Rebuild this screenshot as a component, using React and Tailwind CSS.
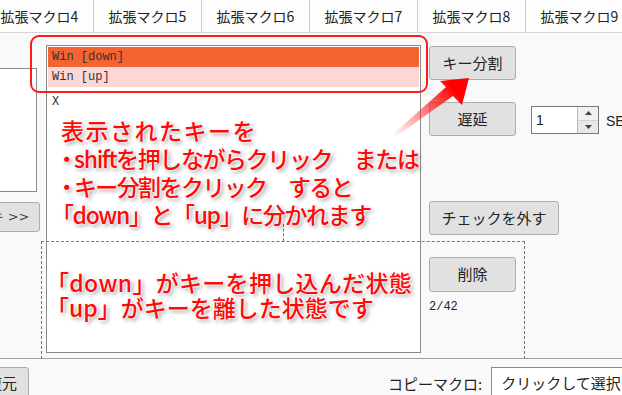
import React from "react";

const tabs = ["拡張マクロ4", "拡張マクロ5", "拡張マクロ6", "拡張マクロ7", "拡張マクロ8", "拡張マクロ9"];

function Btn({ className = "", children }) {
  return (
    <div
      className={
        "flex items-center justify-center bg-[#e1e1e1] border border-[#adadad] rounded-[3px] text-[15px] text-[#222] shrink-0 " +
        className
      }
    >
      {children}
    </div>
  );
}

const note =
  "text-[#ff0a0a] font-medium text-[23px] whitespace-nowrap [text-shadow:0_0_2px_#fff,0_0_2px_#fff,0_0_3px_#fff,2px_2px_4px_rgba(0,0,0,0.45)]";

const P = ({ children }) => <span className="[font-feature-settings:'palt'] mr-[3px]">{children}</span>;

export default function App() {
  return (
    <div className="relative w-[622px] h-[395px] overflow-hidden bg-[#f9f9f9] font-['Noto_Sans_CJK_JP',sans-serif] text-[#222]">
      {/* tabs */}
      <div className="flex h-[33px] border-b border-[#d6d6d6] bg-[#fdfdfd] ml-[-14px]">
        {tabs.map((t) => (
          <div
            key={t}
            className="w-[108px] shrink-0 border-r border-[#cdcdcd] flex items-center justify-center text-[14px] text-[#222]"
          >
            {t}
          </div>
        ))}
      </div>

      {/* body */}
      <div className="flex h-[326px] border-b border-[#a0a0a0]">
        {/* left column */}
        <div className="w-[37px] shrink-0 flex flex-col">
          <div className="mt-[35px] h-[124px] bg-white border border-l-0 border-[#8a8a8a]" />
          <Btn className="mt-[10px] h-[30px] w-[60px] ml-[-20px] text-[14px]">
            <span className="font-['DejaVu_Sans',sans-serif] text-[13px] text-[#444]">キ &gt;&gt;</span>
          </Btn>
        </div>

        {/* list */}
        <div className="ml-[9px] mt-[12px] w-[375px] h-[308px] shrink-0 border border-[#8a8a8a] bg-white p-px font-['Liberation_Mono',monospace] text-[12px] text-[#333]">
          <div className="h-[20px] bg-[#f26532] flex items-center pl-[4px]">Win [down]</div>
          <div className="h-[20px] bg-[#fdd6d6] flex items-center pl-[4px]">Win [up]</div>
          <div className="h-[22px] flex items-center pl-[4px] pt-[8px]">X</div>
        </div>

        {/* right column */}
        <div className="ml-[8px] pt-[13px] flex flex-col">
          <Btn className="w-[87px] h-[34px]">キー分割</Btn>
          <div className="flex items-start mt-[22px]">
            <Btn className="w-[87px] h-[34px]">遅延</Btn>
            <div className="ml-[15px] mt-[4px] w-[68px] h-[28px] bg-white border border-[#7a7a7a] flex">
              <div className="flex-1 flex items-center pl-[4px] font-['Liberation_Sans',sans-serif] text-[14px]">1</div>
              <div className="w-[21px] border-l border-[#b8b8b8] flex flex-col">
                <div className="flex-1 flex items-center justify-center border-b border-[#d0d0d0] bg-[#f0f0f0]">
                  <svg width="7" height="4" viewBox="0 0 7 4"><path d="M0 4 L3.5 0 L7 4Z" fill="#444" /></svg>
                </div>
                <div className="flex-1 flex items-center justify-center bg-[#e8e8e8]">
                  <svg width="7" height="4" viewBox="0 0 7 4"><path d="M0 0 L3.5 4 L7 0Z" fill="#444" /></svg>
                </div>
              </div>
            </div>
            <div className="ml-[7px] mt-[9px] text-[14px] font-['Liberation_Sans',sans-serif] whitespace-nowrap">SEC</div>
          </div>
          <Btn className="mt-[65px] w-[130px] h-[34px]">チェックを外す</Btn>
          <Btn className="mt-[22px] w-[87px] h-[35px]">削除</Btn>
          <div className="mt-[7px] leading-[16px] text-[12px] font-['Liberation_Mono',monospace] text-[#222]">2/42</div>
        </div>
      </div>

      {/* bottom row */}
      <div className="flex items-start">
        <Btn className="ml-[-25px] mt-[8px] w-[54px] h-[32px]">復元</Btn>
        <div className="ml-[359px] mt-[15px] text-[15px] leading-[20px] whitespace-nowrap">コピーマクロ:</div>
        <div className="ml-[9px] mt-[8px] w-[140px] h-[32px] shrink-0 bg-white border border-[#8a8a8a] flex items-center pl-[9px] text-[15px] whitespace-nowrap">
          クリックして選択
        </div>
      </div>

      {/* overlays: guide lines */}
      <div className="absolute left-[41px] top-[241px] w-[484px] h-[118px] border-t border-l border-r border-dashed border-[#777]" />
      <div className="absolute left-[283px] top-[224px] h-[17px] border-l border-dashed border-[#777]" />

      {/* red highlight box */}
      <div className="absolute left-[30px] top-[35px] w-[398px] h-[58px] border-2 border-[#ff1a1a] rounded-[9px]" />

      {/* arrow */}
      <svg className="absolute left-0 top-0 pointer-events-none" width="622" height="395" viewBox="0 0 622 395">
        <defs>
          <linearGradient id="ag" gradientUnits="userSpaceOnUse" x1="392" y1="135" x2="469" y2="78">
            <stop offset="0" stopColor="#ff3030" stopOpacity="0" />
            <stop offset="0.45" stopColor="#ff2020" stopOpacity="0.6" />
            <stop offset="0.8" stopColor="#ff0000" stopOpacity="1" />
            <stop offset="1" stopColor="#ff0000" stopOpacity="1" />
          </linearGradient>
        </defs>
        <polygon points="392,135 446,87 440,81 469,78 462,105 453,96 395,137" fill="url(#ag)" />
      </svg>

      {/* annotation text */}
      <div className="absolute left-[61px] top-[116px] leading-[28px] flex flex-col">
        <div className={note + " tracking-[1.5px]"}>表示されたキーを</div>
        <div className={note + " tracking-[-1.4px]"}>
          <P>・</P>shiftを押しながらクリック　または
        </div>
        <div className={note + " tracking-[-1.6px]"}>
          <P>・</P>キー分割をクリック　すると
        </div>
        <div className={note + " ml-[-10px] tracking-[-1.4px]"}>「down」と「up」に分かれます</div>
      </div>
      <div className="absolute left-[46px] top-[270px] leading-[25px] flex flex-col">
        <div className={note + " tracking-[0.3px]"}>「down」がキーを押し込んだ状態</div>
        <div className={note}>「up」がキーを離した状態です</div>
      </div>
    </div>
  );
}
